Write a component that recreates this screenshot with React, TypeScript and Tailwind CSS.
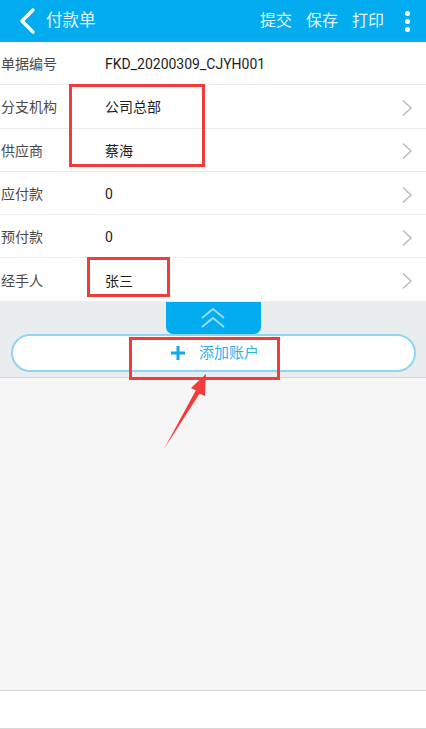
import React from 'react';

const rows = [
  { label: '单据编号', value: 'FKD_20200309_CJYH001', arrow: false },
  { label: '分支机构', value: '公司总部', arrow: true },
  { label: '供应商', value: '蔡海', arrow: true },
  { label: '应付款', value: '0', arrow: true },
  { label: '预付款', value: '0', arrow: true },
  { label: '经手人', value: '张三', arrow: true },
];

function ChevronRight() {
  return (
    <svg width="12" height="18" viewBox="0 0 12 18" className="shrink-0">
      <polyline points="2,1.5 10,9 2,16.5" fill="none" stroke="#bdbdbd" strokeWidth="1.6" />
    </svg>
  );
}

export default function App() {
  return (
    <div
      className="relative w-[426px] h-[729px] overflow-hidden bg-white flex flex-col"
      style={{ fontFamily: "Roboto, 'Noto Sans CJK SC', sans-serif" }}
    >
      {/* Header */}
      <div className="h-[42px] bg-[#02acef] flex items-center text-white shrink-0">
        <svg width="20" height="28" viewBox="0 0 20 28" className="ml-[17px]">
          <polyline points="16,3 5,14 16,25" fill="none" stroke="white" strokeWidth="3.4" strokeLinecap="round" strokeLinejoin="round" />
        </svg>
        <span className="ml-[9px] text-[16.5px] text-[#e8f7fe]">付款单</span>
        <div className="ml-auto flex items-center gap-[14px] text-[16px] text-[#e8f7fe]">
          <span>提交</span>
          <span>保存</span>
          <span>打印</span>
        </div>
        <div className="ml-[21px] mr-[16px] flex flex-col gap-[3px]">
          <span className="w-[5px] h-[5px] rounded-full bg-white" />
          <span className="w-[5px] h-[5px] rounded-full bg-white" />
          <span className="w-[5px] h-[5px] rounded-full bg-white" />
        </div>
      </div>

      {/* Form rows */}
      <div className="flex flex-col shrink-0">
        {rows.map((r) => (
          <div key={r.label} className="h-[43.3px] border-b border-[#ededed] flex items-center pt-[3px] pr-[13px]">
            <span className="w-[105px] pl-[1px] text-[14px] text-[#4a4a4a]">{r.label}</span>
            <span className="flex-1 text-[14px] text-[#1e1e1e]">{r.value}</span>
            {r.arrow && <ChevronRight />}
          </div>
        ))}
      </div>

      {/* Collapse tab + add account */}
      <div className="bg-[#e9eded] h-[76px] flex flex-col items-center shrink-0 border-b border-[#d4d6d6]">
        <div className="w-[95px] h-[32px] bg-[#02acef] rounded-b-[7px] flex items-center justify-center">
          <svg width="28" height="22" viewBox="0 0 28 22">
            <polyline points="3,11 14,2 25,11" fill="none" stroke="#9fdcf7" strokeWidth="1.8" />
            <polyline points="3,20 14,11 25,20" fill="none" stroke="#9fdcf7" strokeWidth="1.8" />
          </svg>
        </div>
        <div className="w-[405px] h-[38px] bg-white border-2 border-[#8dd5f5] rounded-full flex items-center justify-center gap-[14px] pl-[4px]">
          <svg width="14" height="14" viewBox="0 0 14 14">
            <rect x="5.5" y="0" width="3" height="14" fill="#12a9ee" />
            <rect x="0" y="5.5" width="14" height="3" fill="#12a9ee" />
          </svg>
          <span className="text-[15px] text-[#2bb3f0]">添加账户</span>
        </div>
      </div>

      {/* Empty list area */}
      <div className="flex-1 bg-[#f5f5f5] border-b border-[#d8d8d8]" />
      <div className="h-[38px] bg-white border-b border-[#d8d8d8] shrink-0" />

      {/* Red annotations */}
      <div className="absolute left-[69px] top-[84px] w-[136px] h-[83px] border-[3px] border-[#f23b3b]" />
      <div className="absolute left-[87px] top-[257px] w-[83px] h-[40px] border-[3px] border-[#f23b3b]" />
      <div className="absolute left-[129px] top-[337px] w-[151px] h-[43px] border-[3px] border-[#f23b3b]" />
      <svg className="absolute left-0 top-0" width="426" height="729" viewBox="0 0 426 729">
        <polygon points="164,449 199,392 191,388 206,374 205,396 198,393" fill="#f23b3b" />
        <polygon points="164,449 196,390 200,393" fill="#f23b3b" />
      </svg>
    </div>
  );
}
